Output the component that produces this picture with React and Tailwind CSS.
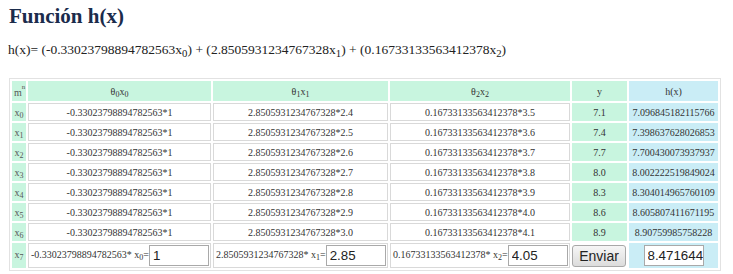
import React from 'react';

const theta = ['-0.33023798894782563', '2.8505931234767328', '0.16733133563412378'];

const rows = [
  { x1: '2.4', x2: '3.5', y: '7.1', h: '7.096845182115766' },
  { x1: '2.5', x2: '3.6', y: '7.4', h: '7.398637628026853' },
  { x1: '2.6', x2: '3.7', y: '7.7', h: '7.700430073937937' },
  { x1: '2.7', x2: '3.8', y: '8.0', h: '8.002222519849024' },
  { x1: '2.8', x2: '3.9', y: '8.3', h: '8.304014965760109' },
  { x1: '2.9', x2: '4.0', y: '8.6', h: '8.605807411671195' },
  { x1: '3.0', x2: '4.1', y: '8.9', h: '8.90759985758228' },
];

const green = 'bg-[#c8f5df] border border-[#c8f5df]';
const blue = 'bg-[#caedf6] border border-[#caedf6]';
const white = 'bg-white border border-[#d9d9d9]';

const Sub = ({ children }) => <sub className="text-[80%] leading-none">{children}</sub>;

const InputBox = ({ value }) => (
  <input
    type="text"
    defaultValue={value}
    className="w-[60px] h-[21px] pl-[3px] border border-[#a9a9a9] bg-white text-[13.33px] text-[#222] font-['Liberation_Sans',sans-serif] outline-none align-middle"
  />
);

const App = () => {
  return (
    <div className="w-[733px] h-[274px] bg-white font-['Liberation_Serif',serif] text-[#222] overflow-hidden">
      {/* Title */}
      <h1 className="pl-[9px] pt-[6px] text-[21px] leading-[21px] font-bold text-[#1b2c4c]">
        Función h(x)
      </h1>

      {/* Formula */}
      <p className="pl-[8px] mt-[15px] text-[13.5px] leading-[16px]">
        h(x)= ({theta[0]}x<Sub>0</Sub>) + ({theta[1]}x<Sub>1</Sub>) + ({theta[2]}x<Sub>2</Sub>)
      </p>

      {/* Table */}
      <table className="ml-[9px] mt-[20px] w-[712px] table-fixed border-separate border-spacing-[2px] border border-[#e2e2e2] text-[10px] text-[#333]">
        <thead>
          <tr className="h-[20px]">
            <th className={`${green} w-[14px] p-0 font-normal text-[#555] text-left align-bottom leading-none`}>
              <span className="relative top-[-2px] pl-[1px]">m</span>
              <span className="relative top-[-9px] text-[7px]">n</span>
            </th>
            <th className={`${green} w-[183px] p-0 font-normal`}>θ<Sub>0</Sub>x<Sub>0</Sub></th>
            <th className={`${green} w-[175px] p-0 font-normal`}>θ<Sub>1</Sub>x<Sub>1</Sub></th>
            <th className={`${green} w-[180px] p-0 font-normal`}>θ<Sub>2</Sub>x<Sub>2</Sub></th>
            <th className={`${green} w-[55px] p-0 font-normal`}>y</th>
            <th className={`${blue} w-[89px] p-0 font-normal`}>h(x)</th>
          </tr>
        </thead>
        <tbody>
          {rows.map((r, i) => (
            <tr key={i} className="h-[18px]">
              <td className={`${green} p-0 text-center text-[#555]`}>x<Sub>{i}</Sub></td>
              <td className={`${white} p-0 text-center`}>{theta[0]}*1</td>
              <td className={`${white} p-0 text-center`}>{theta[1]}*{r.x1}</td>
              <td className={`${white} p-0 text-center`}>{theta[2]}*{r.x2}</td>
              <td className={`${green} p-0 text-center`}>{r.y}</td>
              <td className={`${blue} p-0 text-center whitespace-nowrap overflow-hidden`}>{r.h}</td>
            </tr>
          ))}
          <tr className="h-[25px]">
            <td className={`${green} p-0 text-center text-[#555] align-top pt-[3px]`}>x<Sub>7</Sub></td>
            <td className={`${white} p-0 pl-[2px] whitespace-nowrap`}>
              {theta[0]}* x<Sub>0</Sub>=<InputBox value="1" />
            </td>
            <td className={`${white} p-0 pl-[2px] whitespace-nowrap`}>
              {theta[1]}* x<Sub>1</Sub>=<InputBox value="2.85" />
            </td>
            <td className={`${white} p-0 pl-[2px] whitespace-nowrap`}>
              {theta[2]}* x<Sub>2</Sub>=<InputBox value="4.05" />
            </td>
            <td className="p-0 bg-white">
              <button
                type="button"
                className="w-[54px] h-[22px] rounded-[3px] border border-[#a8a8a8] bg-gradient-to-b from-[#f6f6f6] to-[#dcdcdc] text-[14px] text-[#222] font-['Liberation_Sans',sans-serif]"
              >
                Enviar
              </button>
            </td>
            <td className={`${blue} p-0 text-center`}>
              <InputBox value="8.471644322279064" />
            </td>
          </tr>
        </tbody>
      </table>
    </div>
  );
};

export default App;
